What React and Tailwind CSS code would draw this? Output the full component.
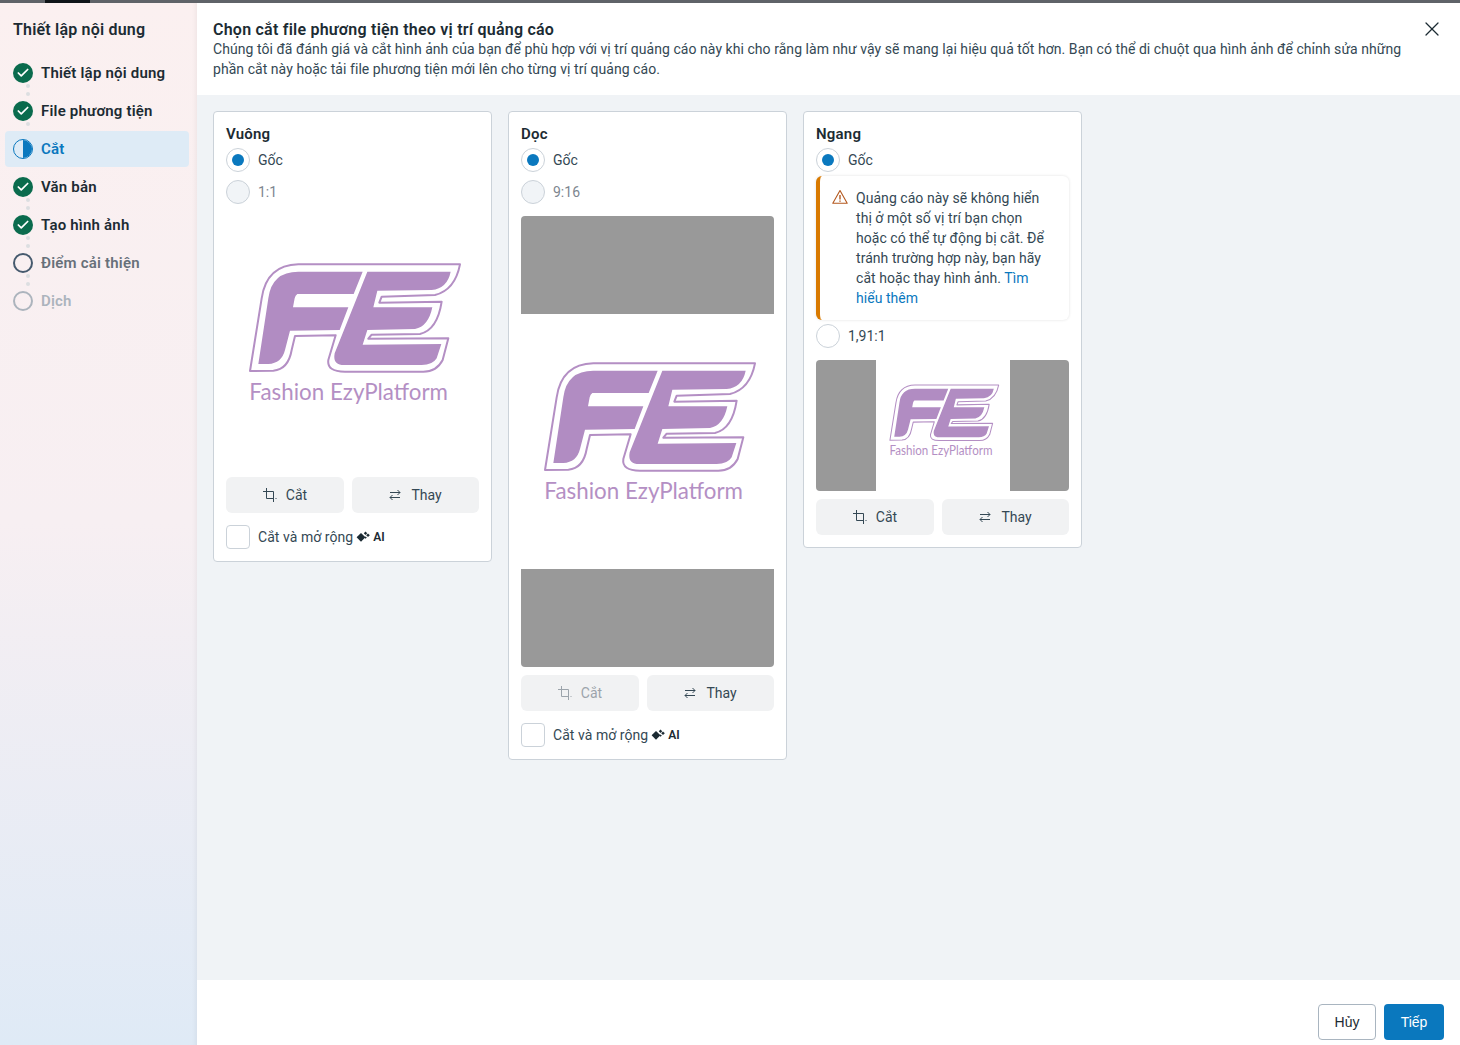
import React from "react";
import { X, Check } from "lucide-react";

const FONT = { fontFamily: "Roboto, 'Noto Sans', sans-serif" };

function Logo({ className }) {
  return (
    <svg viewBox="48 318 759 759" className={`bg-white ${className}`}>
      <path d="M120 783 L155 565 Q170 465 265 463 L750 463 Q735 540 675 555 L515 560 L508 578 L695 575 Q682 660 630 672 L485 674 L475 686 L715 685 L698 750 Q680 785 640 785 L405 785 Q350 785 355 750 L377 676 L255 678 L245 720 Q235 778 190 782 Z" fill="#ffffff" stroke="#b48fc4" strokeWidth="6" strokeLinejoin="round" />
      <path d="M145 762 L175 565 Q185 485 265 485 L458 485 L431 552 L262 552 Q256 556 254 565 L249 592 L415 592 L389 660 L240 662 L225 720 Q215 760 175 762 Z" fill="#b18cc2" />
      <path d="M472 485 L722 485 Q712 535 665 540 L502 542 L490 592 L667 592 Q655 650 615 657 L472 660 L458 704 L694 702 L680 745 Q668 765 635 765 L395 765 Q368 762 374 730 Z" fill="#b18cc2" />
      <text x="118" y="870" fontFamily="Lato, 'Open Sans', sans-serif" fontSize="72" fill="#b48fc4" textLength="596" lengthAdjust="spacingAndGlyphs">Fashion EzyPlatform</text>
    </svg>
  );
}

function StepIcon({ kind }) {
  if (kind === "done")
    return (
      <span className="flex h-5 w-5 items-center justify-center rounded-full bg-[#0a6b4d] text-white">
        <Check size={14} strokeWidth={3} />
      </span>
    );
  if (kind === "half")
    return (
      <span className="flex h-5 w-5 overflow-hidden rounded-full border border-[#0a78be]">
        <span className="w-1/2" />
        <span className="w-1/2 bg-[#0a78be]" />
      </span>
    );
  if (kind === "todo") return <span className="h-5 w-5 rounded-full border-2 border-[#465a6e]" />;
  return <span className="h-5 w-5 rounded-full border-2 border-[#acb4bd]" />;
}

function Dots({ show = 2 }) {
  return (
    <div className="absolute left-[21px] top-[29px] flex flex-col gap-1">
      {Array.from({ length: show }).map((_, i) => (
        <span key={i} className="h-1 w-1 rounded-full bg-[#dcdee1]" />
      ))}
    </div>
  );
}

const steps = [
  ["done", "Thiết lập nội dung", "text-[#1c2b33]", 2],
  ["done", "File phương tiện", "text-[#1c2b33]", 1],
  ["half", "Cắt", "text-[#0a78be]", 0],
  ["done", "Văn bản", "text-[#1c2b33]", 2],
  ["done", "Tạo hình ảnh", "text-[#1c2b33]", 2],
  ["todo", "Điểm cải thiện", "text-[#67707a]", 2],
  ["off", "Dịch", "text-[#acb4bd]", 0],
];

function Sidebar() {
  return (
    <aside className="flex w-[197px] shrink-0 flex-col bg-gradient-to-b from-[#fbf0f0] via-[#f7eff2] to-[#dfeaf6] pt-[17px] shadow-[inset_-6px_0_6px_-6px_rgba(0,0,0,0.08)]">
      <div className="pl-[13px] text-[16px] font-semibold leading-5 tracking-[0.2px] text-[#1c2b33]">Thiết lập nội dung</div>
      <div className="mt-[15px] flex flex-col gap-0.5 pl-[5px] pr-2">
        {steps.map(([kind, label, color, dots]) => (
          <div key={label} className={`relative flex h-9 items-center gap-2 rounded pl-2 ${kind === "half" ? "bg-[#deebf6]" : ""}`}>
            <StepIcon kind={kind} />
            <span className={`text-[15px] font-semibold tracking-[0.2px] ${color}`}>{label}</span>
            {dots > 0 && <Dots show={dots} />}
          </div>
        ))}
      </div>
    </aside>
  );
}

function Radio({ checked, disabled, label }) {
  return (
    <label className="flex h-6 items-center gap-2">
      <span className={`flex h-6 w-6 items-center justify-center rounded-full border border-[#cbd2d9] ${disabled ? "bg-[#f1f4f7]" : "bg-white"}`}>
        {checked && <span className="h-3 w-3 rounded-full bg-[#0a78be]" />}
      </span>
      <span className={`text-[14px] leading-5 ${disabled ? "text-[#7d868f]" : "text-[#344854]"}`}>{label}</span>
    </label>
  );
}

function CropIcon() {
  return (
    <svg viewBox="0 0 14 14" className="h-[14px] w-[14px]" fill="none" stroke="currentColor" strokeWidth="1">
      <path d="M0 3.5 H10.5 V14" />
      <path d="M3.5 0 V10.5 H10.5" />
      <path d="M12.5 10.5 H13.5" />
    </svg>
  );
}

function SwapIcon() {
  return (
    <svg viewBox="0 0 12 12" className="h-3 w-3" fill="none" stroke="currentColor" strokeWidth="1">
      <path d="M1 3.5 H11 M8.5 1 L11 3.5 L8.5 6" />
      <path d="M11 8.5 H1 M3.5 6 L1 8.5 L3.5 11" />
    </svg>
  );
}

function Buttons({ cropDisabled }) {
  return (
    <div className="mt-2 flex gap-2">
      <button className={`flex h-9 w-[118px] items-center justify-center gap-[9px] rounded-md bg-[#f1f2f3] text-[14px] font-normal ${cropDisabled ? "text-[#9ca4ab]" : "text-[#344854]"}`}>
        <CropIcon /> Cắt
      </button>
      <button className="flex h-9 flex-1 items-center justify-center gap-[10px] rounded-md bg-[#f1f2f3] text-[14px] font-normal text-[#344854]">
        <SwapIcon /> Thay
      </button>
    </div>
  );
}

function Sparkle() {
  return (
    <svg viewBox="0 0 14 12" className="h-3 w-[14px] text-[#1c2b33]" fill="currentColor">
      <path d="M5 2 L9.4 6.2 L5 10.8 L0.6 6.2 Z" />
      <path d="M9.5 0.6 L11.2 2.3 L9.5 4 L7.8 2.3 Z" />
      <path d="M12 2.4 L13.8 4.2 L12 6 L10.2 4.2 Z" />
      <path d="M9.6 5.4 L10.8 6.6 L9.6 7.8 L8.4 6.6 Z" />
    </svg>
  );
}

function AiCheck() {
  return (
    <div className="mt-3 flex h-6 items-center gap-2">
      <span className="h-6 w-6 rounded border border-[#cbd2d9] bg-white" />
      <span className="text-[14px] tracking-[0.05px] text-[#344854]">Cắt và mở rộng</span>
      <span className="-ml-[5px] flex items-center gap-[3px]">
        <Sparkle />
        <span className="text-[12px] font-semibold text-[#1c2b33]">AI</span>
      </span>
    </div>
  );
}

function Card({ title, children }) {
  return (
    <div className="w-[279px] rounded border border-[#cbd2d9] bg-white px-3 pb-3 pt-3">
      <div className="text-[15px] font-semibold leading-5 tracking-[0.2px] text-[#1c2b33]">{title}</div>
      {children}
    </div>
  );
}

function Footer() {
  return (
    <footer className="flex h-[65px] shrink-0 items-start justify-end gap-2 bg-white pr-4 pt-6">
      <button className="h-9 w-[58px] rounded border border-[#a9b5c0] bg-white text-[14px] font-medium text-[#1c2b33]" style={{ fontFamily: "'Liberation Sans', sans-serif" }}>Hủy</button>
      <button className="h-9 w-[60px] rounded bg-[#0a78be] text-[14px] font-medium text-white" style={{ fontFamily: "'Liberation Sans', sans-serif" }}>Tiếp</button>
    </footer>
  );
}

export default function App() {
  return (
    <div className="flex h-[1045px] w-[1460px] flex-col overflow-hidden bg-white" style={FONT}>
      <div className="flex h-[3px] shrink-0 bg-[#5f6368]">
        <span className="ml-[45px] w-[45px] bg-[#0f1418]" />
      </div>
      <div className="flex min-h-0 flex-1">
        <Sidebar />
        <main className="flex min-w-0 flex-1 flex-col">
          <header className="relative h-[92px] shrink-0 bg-white pl-4 pr-[56px] pt-[17px]">
            <h1 className="text-[16px] font-semibold leading-[19px] tracking-[0.23px] text-[#1c2b33]">Chọn cắt file phương tiện theo vị trí quảng cáo</h1>
            <p className="text-[14px] leading-5 tracking-[0.05px] text-[#344854]">Chúng tôi đã đánh giá và cắt hình ảnh của bạn để phù hợp với vị trí quảng cáo này khi cho rằng làm như vậy sẽ mang lại hiệu quả tốt hơn. Bạn có thể di chuột qua hình ảnh để chỉnh sửa những phần cắt này hoặc tải file phương tiện mới lên cho từng vị trí quảng cáo.</p>
            <button className="absolute right-4 top-[14px] text-[#1c2b33]"><X size={24} strokeWidth={1.25} /></button>
          </header>
          <div className="flex min-h-0 flex-1 items-start gap-4 bg-[#f0f3f6] p-4">
            <Card title="Vuông">
              <div className="mt-1 flex flex-col gap-2">
                <Radio checked label="Gốc" />
                <Radio disabled label="1:1" />
              </div>
              <div className="mt-3 h-[253px] w-[253px] overflow-hidden rounded"><Logo className="h-full w-full" /></div>
              <Buttons />
              <AiCheck />
            </Card>
            <Card title="Dọc">
              <div className="mt-1 flex flex-col gap-2">
                <Radio checked label="Gốc" />
                <Radio disabled label="9:16" />
              </div>
              <div className="mt-3 flex h-[451px] w-[253px] flex-col overflow-hidden rounded bg-[#999999]">
                <div className="h-[98px]" />
                <Logo className="h-[255px] w-[253px]" />
                <div className="h-[98px]" />
              </div>
              <Buttons cropDisabled />
              <AiCheck />
            </Card>
            <Card title="Ngang">
              <div className="mt-1"><Radio checked label="Gốc" /></div>
              <div className="mt-1 flex h-[144px] rounded-md border-l-4 border-l-[#d97a00] bg-white py-3 pl-3 pr-4 shadow-[0_0_3px_rgba(0,0,0,0.12)]">
                <svg viewBox="0 0 16 16" className="mt-[1px] h-4 w-4 shrink-0 text-[#b4581e]" fill="none" stroke="currentColor" strokeWidth="1.1" strokeLinejoin="round">
                  <path d="M8 1.5 L15.2 14.2 H0.8 Z" />
                  <path d="M8 6 V10.5" strokeWidth="1.4" />
                  <path d="M8 11.6 V12.8" strokeWidth="1.4" />
                </svg>
                <p className="ml-2 text-[14px] leading-5 tracking-[0.05px] text-[#344854]">Quảng cáo này sẽ không hiển thị ở một số vị trí bạn chọn hoặc có thể tự động bị cắt. Để tránh trường hợp này, bạn hãy cắt hoặc thay hình ảnh. <span className="text-[#0a78be]">Tìm hiểu thêm</span></p>
              </div>
              <div className="mt-1"><Radio label="1,91:1" /></div>
              <div className="mt-3 flex h-[131px] w-[253px] justify-center overflow-hidden rounded bg-[#999999]">
                <Logo className="h-[131px] w-[134px]" />
              </div>
              <Buttons />
            </Card>
          </div>
          <Footer />
        </main>
      </div>
    </div>
  );
}
